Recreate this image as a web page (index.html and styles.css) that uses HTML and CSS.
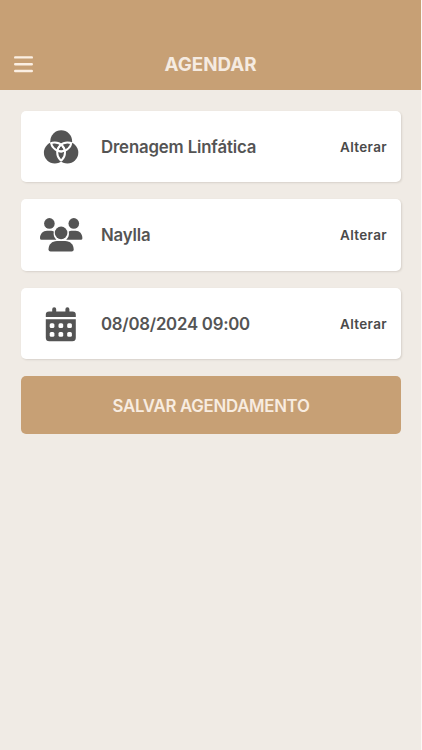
FILE: index.html
```html
<!DOCTYPE html>
<html lang="pt-BR">
<head>
<meta charset="utf-8">
<meta name="viewport" content="width=device-width, initial-scale=1">
<title>Agendar</title>
<link rel="stylesheet" href="styles.css">
</head>
<body>
<div class="app">
  <header class="topbar">
    <button class="menu" aria-label="Menu">
      <svg viewBox="0 0 19 18" fill="none" stroke="#fbefe3" stroke-width="2.4" stroke-linecap="round"><path d="M1.200 2.400h16.600M1.200 9.200h16.600M1.200 16h16.600"/></svg>
    </button>
    <h1 class="title">AGENDAR</h1>
  </header>
  <main class="content">
    <section class="card">
      <svg class="icon" viewBox="0 0 44 36">
        <defs>
          <clipPath id="top"><circle cx="22.2" cy="12.2" r="10.9"/></clipPath>
          <clipPath id="left"><circle cx="15.8" cy="23.6" r="10.9"/></clipPath>
          <clipPath id="right"><circle cx="28.400" cy="23.6" r="10.9"/></clipPath>
        </defs>
        <g fill="#545454"><circle cx="22.2" cy="12.2" r="10.9"/><circle cx="15.8" cy="23.6" r="10.9"/><circle cx="28.400" cy="23.6" r="10.9"/></g>
        <g fill="none" stroke="#fff" stroke-width="2">
          <g clip-path="url(#top)"><circle cx="15.8" cy="23.6" r="10.200"/><circle cx="28.400" cy="23.6" r="10.200"/></g>
          <g clip-path="url(#left)"><circle cx="22.2" cy="12.2" r="10.200"/><circle cx="28.400" cy="23.6" r="10.200"/></g>
          <g clip-path="url(#right)"><circle cx="22.2" cy="12.2" r="10.200"/><circle cx="15.8" cy="23.6" r="10.200"/></g>
        </g>
      </svg>
      <span class="label service">Drenagem Linfática</span>
      <a class="change">Alterar</a>
    </section>
    <section class="card">
      <svg class="icon" viewBox="0 0 44 36" fill="#545454">
        <circle cx="10.4" cy="6.4" r="5.3"/><circle cx="34.8" cy="6.4" r="5.3"/>
        <path d="M1 21.2C1 16.8 4 13.8 8 13.8h4.3q1.4 0 2.5.6c-.7 3.3.4 6.3 2.6 8.3H2.5Q1 22.700 1 21.200z"/>
        <path d="M43.400 21.200C43.400 16.800 40.600 13.800 36.600 13.800h-4.300q-1.400 0-2.500.6c.7 3.300-.4 6.300-2.600 8.300h14.700q1.500 0 1.500-1.500z"/>
        <circle cx="22.100" cy="15.900" r="6.300"/>
        <path d="M9.500 32.500c0-5 3.500-8.500 8.500-8.500h8.200c5 0 8.500 3.500 8.500 8.500q0 2-2 2H11.500q-2 0-2-2z"/>
      </svg>
      <span class="label name">Naylla</span>
      <a class="change">Alterar</a>
    </section>
    <section class="card">
      <svg class="icon" viewBox="0 0 44 36">
        <path fill="#545454" d="M6.800 11V8.800q0-3.300 3.300-3.300h3.100V3.200a2 2 0 0 1 4 0V5.500h9.200V3.200a2 2 0 0 1 4 0V5.500h3.100q3.300 0 3.300 3.300V11zM6.800 13.200h30V31.800q0 3.500-3.500 3.500H10.300q-3.500 0-3.500-3.500z"/>
        <g fill="#fff"><rect x="10.700" y="17.300" width="4.700" height="4.700" rx="1.500"/><rect x="19.500" y="17.300" width="4.700" height="4.700" rx="1.500"/><rect x="28.200" y="17.300" width="4.700" height="4.700" rx="1.500"/><rect x="10.700" y="26.100" width="4.700" height="4.700" rx="1.500"/><rect x="19.500" y="26.100" width="4.700" height="4.700" rx="1.500"/><rect x="28.200" y="26.100" width="4.700" height="4.700" rx="1.500"/></g>
      </svg>
      <span class="label date">08/08/2024 09:00</span>
      <a class="change">Alterar</a>
    </section>
    <button class="save">SALVAR AGENDAMENTO</button>
  </main>
</div>
</body>
</html>
```
FILE: styles.css
```css
* { box-sizing: border-box; }
body { margin: 0; background: #fbf9f7; font-family: Inter, "Liberation Sans", sans-serif; }
.app { width: 421px; height: 750px; background: #f0ebe5; overflow: hidden; }
.topbar {
  display: grid;
  grid-template-columns: 47px 1fr 47px;
  align-items: center;
  height: 90px;
  padding-top: 39px;
  background: #c7a075;
}
.menu { display: flex; padding: 0 0 1px 14px; border: 0; background: none; }
.menu svg { width: 19px; height: 18px; }
.title { margin: 0; color: #f5ebe1; font-size: 18.800px; font-weight: 700; line-height: 24px; text-align: center; }
.content { display: flex; flex-direction: column; gap: 17px; padding: 20.500px 20px 0 21px; }
.card {
  display: flex;
  align-items: center;
  height: 71.500px;
  padding: 1px 14px 0 18px;
  border-radius: 5px;
  background: #fff;
  box-shadow: 1px 1px 2px rgba(90, 75, 60, .16);
}
.icon { flex: none; width: 44px; height: 36px; }
.label { flex: 1; margin-left: 18px; color: #545454; font-size: 16.800px; font-weight: 600; letter-spacing: -.15px; line-height: 22px; }
.date { letter-spacing: -.24px; }
.change { color: #4a4a4a; font-size: 13.500px; font-weight: 600; letter-spacing: .36px; line-height: 20px; }
.save {
  height: 58px;
  padding: 3px 0 0;
  margin-top: -.5px;
  border: 0;
  border-radius: 5px;
  background: #c7a075;
  color: #f8ece0;
  font: 600 16.800px/22px Inter, "Liberation Sans", sans-serif;
  letter-spacing: -.28px;
}
```
